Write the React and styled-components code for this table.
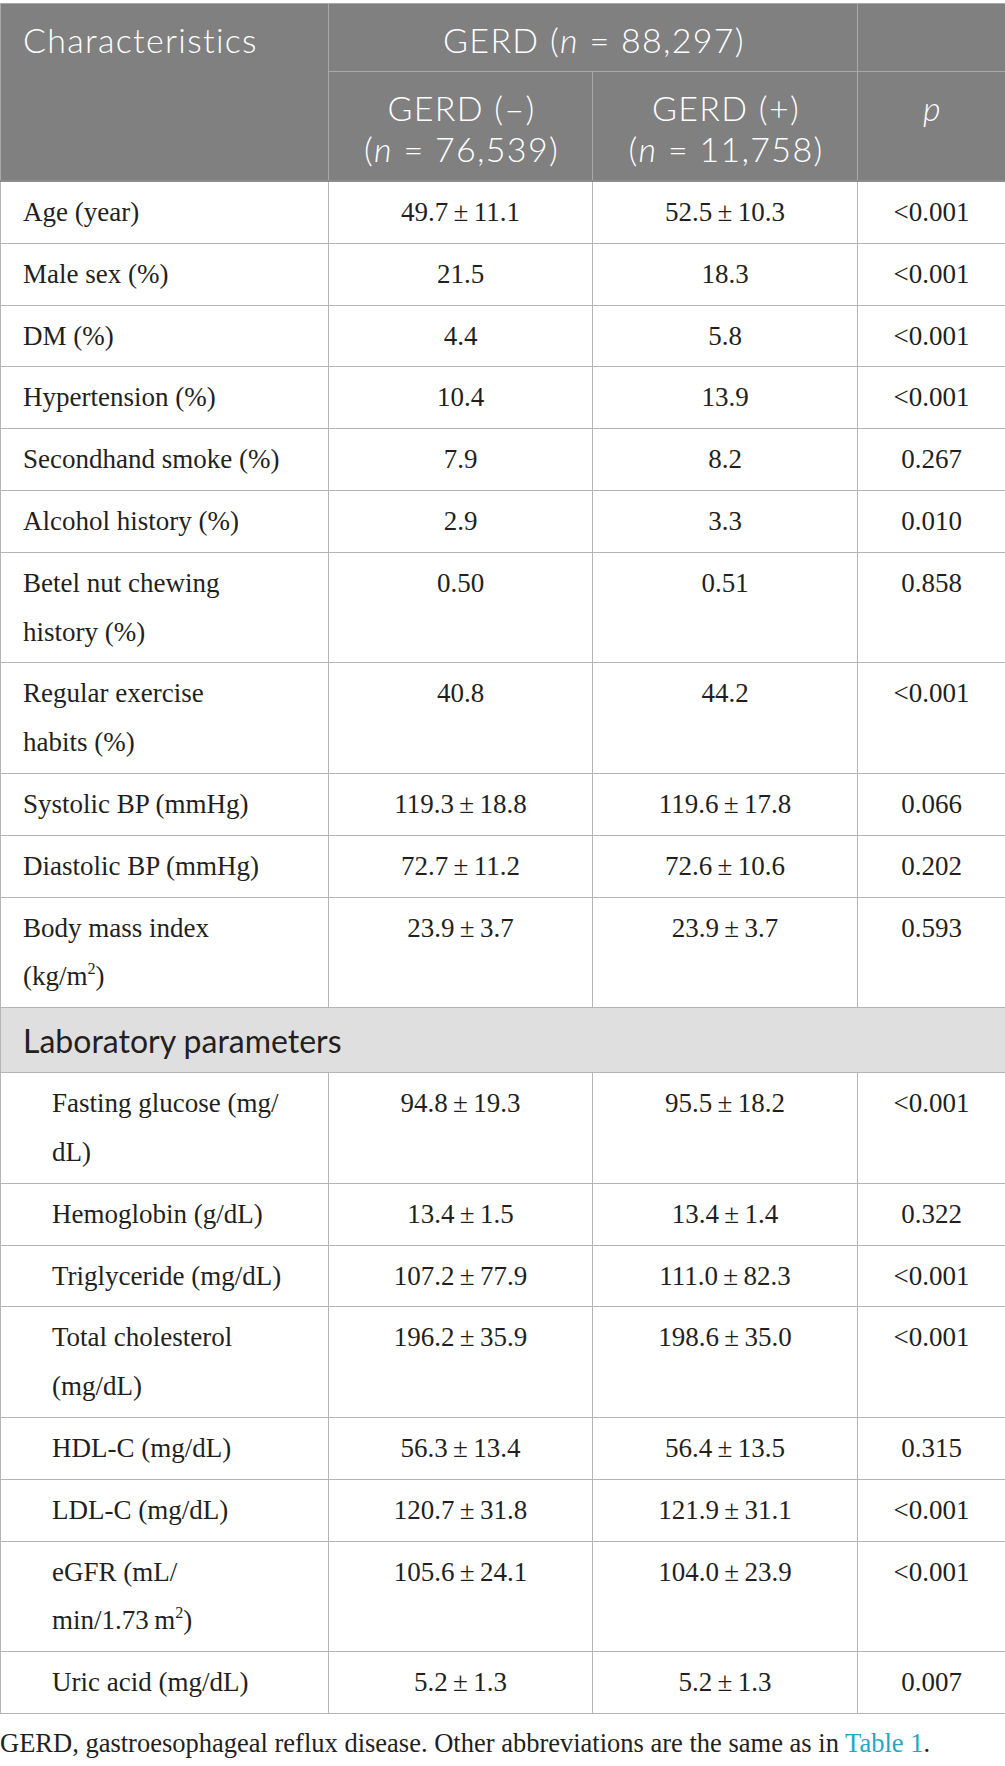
import React from 'react';
import styled, { createGlobalStyle } from 'styled-components';

const GlobalStyle = createGlobalStyle`
  html, body {
    margin: 0;
    padding: 0;
    background: #ffffff;
  }
  body {
    font-family: "Liberation Serif", "Times New Roman", serif;
    color: #231f20;
  }
`;

const Page = styled.div`
  width: 1005px;
  padding-top: 3px;
`;

const Table = styled.table`
  width: 1005px;
  border-collapse: collapse;
  table-layout: fixed;
  border: 1px solid #b5b5b5;
`;

const HeadCell = styled.th`
  background: #7f807f;
  color: #ffffff;
  font-family: Lato, "Open Sans", sans-serif;
  font-weight: 300;
  font-size: 34px;
  letter-spacing: 1.3px;
  line-height: 41px;
  padding: 15px 20px 11px 22px;
  text-align: ${(p) => (p.$left ? 'left' : 'center')};
  vertical-align: top;
  white-space: nowrap;
  border: 1px solid #a9a9a9;
  border-bottom: ${(p) => (p.$last ? '2px solid #8c8c8c' : '1px solid #a9a9a9')};
  i {
    font-style: italic;
  }
`;

const Cell = styled.td`
  font-size: 27px;
  line-height: 48.8px;
  padding: 6px ${(p) => (p.$label ? '10px' : '8px')} 6px
    ${(p) => (p.$label ? (p.$indent ? '51px' : '22px') : '8px')};
  text-align: ${(p) => (p.$label ? 'left' : 'center')};
  vertical-align: top;
  border: 1px solid #b5b5b5;
  sup {
    font-size: 0.6em;
    line-height: 0;
    vertical-align: 0.7em;
  }
`;

const SectionCell = styled.td`
  background: #e0dfdf;
  font-family: Lato, "Open Sans", sans-serif;
  font-size: 32px;
  line-height: 44px;
  color: #231f20;
  padding: 11px 22px 9px;
  text-align: left;
  border: 1px solid #b5b5b5;
`;

const Footnote = styled.p`
  margin: 0;
  padding-top: 12px;
  font-size: 26.5px;
  line-height: 34px;
  color: #231f20;
`;

const TableLink = styled.a`
  color: #1fa8c2;
  text-decoration: none;
`;

const pm = (a, b) => `${a}\u2009±\u2009${b}`;

const general = [
  ['Age (year)', pm('49.7', '11.1'), pm('52.5', '10.3'), '<0.001'],
  ['Male sex (%)', '21.5', '18.3', '<0.001'],
  ['DM (%)', '4.4', '5.8', '<0.001'],
  ['Hypertension (%)', '10.4', '13.9', '<0.001'],
  ['Secondhand smoke (%)', '7.9', '8.2', '0.267'],
  ['Alcohol history (%)', '2.9', '3.3', '0.010'],
  [<>Betel nut chewing<br />history (%)</>, '0.50', '0.51', '0.858'],
  [<>Regular exercise<br />habits (%)</>, '40.8', '44.2', '<0.001'],
  ['Systolic BP (mmHg)', pm('119.3', '18.8'), pm('119.6', '17.8'), '0.066'],
  ['Diastolic BP (mmHg)', pm('72.7', '11.2'), pm('72.6', '10.6'), '0.202'],
  [<>Body mass index<br />(kg/m<sup>2</sup>)</>, pm('23.9', '3.7'), pm('23.9', '3.7'), '0.593'],
];

const lab = [
  [<>Fasting glucose (mg/<br />dL)</>, pm('94.8', '19.3'), pm('95.5', '18.2'), '<0.001'],
  ['Hemoglobin (g/dL)', pm('13.4', '1.5'), pm('13.4', '1.4'), '0.322'],
  ['Triglyceride (mg/dL)', pm('107.2', '77.9'), pm('111.0', '82.3'), '<0.001'],
  [<>Total cholesterol<br />(mg/dL)</>, pm('196.2', '35.9'), pm('198.6', '35.0'), '<0.001'],
  ['HDL-C (mg/dL)', pm('56.3', '13.4'), pm('56.4', '13.5'), '0.315'],
  ['LDL-C (mg/dL)', pm('120.7', '31.8'), pm('121.9', '31.1'), '<0.001'],
  [<>eGFR (mL/<br />min/1.73{'\u2009'}m<sup>2</sup>)</>, pm('105.6', '24.1'), pm('104.0', '23.9'), '<0.001'],
  ['Uric acid (mg/dL)', pm('5.2', '1.3'), pm('5.2', '1.3'), '0.007'],
];

const DataRow = ({ row, indent }) => (
  <tr>
    <Cell $label $indent={indent}>{row[0]}</Cell>
    <Cell>{row[1]}</Cell>
    <Cell>{row[2]}</Cell>
    <Cell>{row[3]}</Cell>
  </tr>
);

export default function App() {
  return (
    <Page>
      <GlobalStyle />
      <Table>
        <colgroup>
          <col style={{ width: 328 }} />
          <col style={{ width: 264 }} />
          <col style={{ width: 265 }} />
          <col style={{ width: 148 }} />
        </colgroup>
        <thead>
          <tr>
            <HeadCell $left $last rowSpan={2}>Characteristics</HeadCell>
            <HeadCell colSpan={2}>GERD (<i>n</i> = 88,297)</HeadCell>
            <HeadCell />
          </tr>
          <tr>
            <HeadCell $last>GERD (–)<br />(<i>n</i> = 76,539)</HeadCell>
            <HeadCell $last>GERD (+)<br />(<i>n</i> = 11,758)</HeadCell>
            <HeadCell $last><i>p</i></HeadCell>
          </tr>
        </thead>
        <tbody>
          {general.map((row, i) => (
            <DataRow key={`g${i}`} row={row} />
          ))}
          <tr>
            <SectionCell colSpan={4}>Laboratory parameters</SectionCell>
          </tr>
          {lab.map((row, i) => (
            <DataRow key={`l${i}`} row={row} indent />
          ))}
        </tbody>
      </Table>
      <Footnote>
        GERD, gastroesophageal reflux disease. Other abbreviations are the same as in{' '}
        <TableLink href="#table1">Table 1</TableLink>.
      </Footnote>
    </Page>
  );
}
